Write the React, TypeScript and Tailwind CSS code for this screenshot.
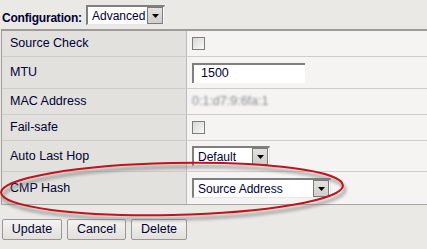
import React from "react";

function Arrow() {
  return (
    <div className="flex h-[17px] w-[16px] shrink-0 items-center justify-center border border-[#7a7a7a] bg-gradient-to-b from-[#e4e2de] to-[#d0ceca]">
      <svg width="7" height="4" viewBox="0 0 7 4">
        <polygon points="0,0 7,0 3.5,4" fill="#000" />
      </svg>
    </div>
  );
}

function Select({ value, w }: { value: string; w: string }) {
  return (
    <div className={`flex h-[20px] items-center justify-between border-l-2 border-t-2 border-[#7f7f7f] border-r border-b border-r-[#e6e6e6] border-b-[#e6e6e6] bg-white pl-[4px] pr-[1px] ${w}`}>
      <span className="text-[12px] leading-none text-[#000033]">{value}</span>
      <Arrow />
    </div>
  );
}

function Checkbox() {
  return <div className="h-[13px] w-[13px] border border-[#7e7e7e] bg-gradient-to-br from-[#d6d6d6] to-[#fafafa]" />;
}

function Row({ label, h, children, last }: { label: string; h: string; children?: React.ReactNode; last?: boolean }) {
  return (
    <div className={`grid grid-cols-[185px_1fr] ${h} ${last ? "" : "border-b border-[#cfcdc9]"}`}>
      <div className="flex items-center border-r border-[#bdbbb7] bg-[#e2e1dd] pl-[8px] text-[12.5px] text-[#000033]">{label}</div>
      <div className="flex items-center bg-[#f5f4f2] pl-[5px]">{children}</div>
    </div>
  );
}

function Btn({ label, w }: { label: string; w: string }) {
  return (
    <div className={`flex h-[21px] items-center justify-center rounded-[2px] border border-[#9a9894] bg-gradient-to-b from-[#f4f3f1] to-[#e2e0dc] text-[12.5px] text-[#000033] ${w}`}>
      {label}
    </div>
  );
}

export default function App() {
  return (
    <div className="relative h-[249px] w-[427px] overflow-hidden bg-[#ebe9e5]" style={{ fontFamily: '"Liberation Sans", Arial, sans-serif' }}>
      <div className="flex h-[29px] items-start pl-[2px] pt-[5px]">
        <span className="mt-[6px] w-[84px] text-[12px] font-bold leading-[14px] tracking-[-0.2px] text-[#000033]">Configuration:</span>
        <Select value="Advanced" w="w-[79px]" />
      </div>
      <div className="ml-[1px] border-t-2 border-l border-b border-[#a19f9b] border-t-[#9e9c98] border-b-[#a9a7a3]">
        <Row label="Source Check" h="h-[26px]"><Checkbox /></Row>
        <Row label="MTU" h="h-[32px]">
          <div className="flex h-[20px] w-[113px] items-center border-l-2 border-t-2 border-[#7f7f7f] bg-white pl-[7px] text-[12.5px] text-[#000033]">1500</div>
        </Row>
        <Row label="MAC Address" h="h-[26px]">
          <span className="text-[12.5px] text-[#8c8c98] blur-[1.2px]">0:1:d7:9:6fa:1</span>
        </Row>
        <Row label="Fail-safe" h="h-[26px]"><Checkbox /></Row>
        <Row label="Auto Last Hop" h="h-[31px]"><Select value="Default" w="w-[78px]" /></Row>
        <Row label="CMP Hash" h="h-[32px]" last><Select value="Source Address" w="w-[139px]" /></Row>
      </div>
      <div className="mt-[14px] flex gap-[5px] pl-[2px]">
        <Btn label="Update" w="w-[60px]" />
        <Btn label="Cancel" w="w-[59px]" />
        <Btn label="Delete" w="w-[56px]" />
      </div>
      <svg className="pointer-events-none absolute left-0 top-0" width="427" height="249" viewBox="0 0 427 249">
        <defs>
          <filter id="sh" x="-20%" y="-50%" width="140%" height="200%">
            <feGaussianBlur stdDeviation="1.5" />
          </filter>
        </defs>
        <ellipse cx="174" cy="193" rx="171" ry="26" transform="rotate(-1.2 174 193)" fill="none" stroke="#777" strokeWidth="3.5" opacity="0.55" filter="url(#sh)" />
        <ellipse cx="172" cy="189" rx="171" ry="26" transform="rotate(-1.2 172 189)" fill="none" stroke="#c0141c" strokeWidth="2" />
      </svg>
    </div>
  );
}
